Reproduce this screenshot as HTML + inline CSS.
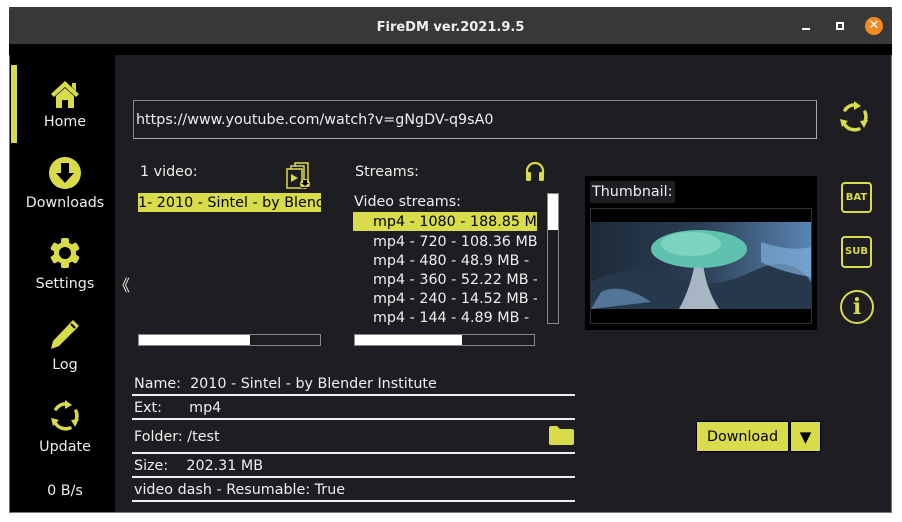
<!DOCTYPE html>
<html><head><meta charset="utf-8"><style>
*{margin:0;padding:0;box-sizing:border-box}
body{width:902px;height:522px;background:#fff;position:relative;overflow:hidden;font-family:"DejaVu Sans","Liberation Sans",sans-serif;font-size:14.3px;color:#eee}
.a{position:absolute;white-space:nowrap}
.ln{position:absolute;left:132px;width:443px;height:2px;background:#eee}
.t{position:absolute;line-height:17px;margin-top:1px;white-space:nowrap}
</style></head><body>
<div class="a" style="left:9px;top:7px;width:883px;height:506px;background:#1e1e22;border:1px solid #777;border-top:none"></div>
<div class="a" style="left:9px;top:7px;width:883px;height:37px;background:#383838;border-radius:4px 4px 0 0"></div>
<div class="a" style="left:9px;top:20px;width:883px;text-align:center;font-weight:bold;font-size:13px;color:#eee">FireDM ver.2021.9.5</div>
<div class="a" style="left:802px;top:28px;width:8px;height:2px;background:#fff"></div>
<div class="a" style="left:836px;top:22px;width:8px;height:8px;border:2px solid #fff"></div>
<div class="a" style="left:865px;top:17px;width:18px;height:18px;border-radius:50%;background:#f08a24;color:#fff;font-size:13px;font-weight:bold;text-align:center;line-height:18px">✕</div>
<div class="a" style="left:9px;top:44px;width:883px;height:11px;background:#000"></div>
<div class="a" style="left:10px;top:44px;width:105px;height:468px;background:#000"></div>
<div class="a" style="left:11px;top:65px;width:6px;height:78px;background:#d9dc4a"></div>
<svg class="a" style="left:49px;top:78px" width="32" height="32" viewBox="0 0 32 32"><path d="M2 16 L16 3 L30 16 L27 19 L16 9 L5 19Z M23 5h4v8l-4-4z" fill="#d9dc4a"/><path d="M7 18 L16 10 L25 18 V30 H19 V22 H13 V30 H7Z" fill="#d9dc4a"/></svg>
<div class="t" style="left:10px;width:110px;text-align:center;top:113px">Home</div>
<svg class="a" style="left:49px;top:157px" width="32" height="32"><circle cx="16" cy="16" r="16" fill="#d9dc4a"/><path d="M12 6h8v10h5L16 26 7 16h5z" fill="#000"/></svg>
<div class="t" style="left:10px;width:110px;text-align:center;top:194px">Downloads</div>
<svg class="a" style="left:49px;top:237px" width="32" height="32" viewBox="0 0 32 32"><g fill="#d9dc4a"><circle cx="16" cy="16" r="11"/><rect x="12" y="1" width="8" height="30" rx="2"/><rect x="12" y="1" width="8" height="30" rx="2" transform="rotate(60 16 16)"/><rect x="12" y="1" width="8" height="30" rx="2" transform="rotate(120 16 16)"/></g><circle cx="16" cy="16" r="6" fill="#000"/></svg>
<div class="t" style="left:10px;width:110px;text-align:center;top:275px">Settings</div>
<div class="a" style="left:114px;top:272px;font-size:16px">《</div>
<svg class="a" style="left:49px;top:318px" width="32" height="34" viewBox="0 0 32 34"><path d="M24 2 L30 8 L10 28 L2 31 L4 23Z" fill="#d9dc4a"/><path d="M22 6l4 4" stroke="#000" stroke-width="2"/></svg>
<div class="t" style="left:10px;width:110px;text-align:center;top:356px">Log</div>
<svg class="a" style="left:48px;top:399px" width="34" height="34" viewBox="0 0 34 34"><g fill="none" stroke="#d9dc4a" stroke-width="3.5" stroke-linecap="round"><path d="M8 10 A12 12 0 0 1 19 5"/><path d="M28 12 A12 12 0 0 1 27 23"/><path d="M22 29 A12 12 0 0 1 8 25"/></g><g fill="#d9dc4a"><path d="M17 1l7 5-7 4z"/><path d="M31 20l-4 8-4-7z"/><path d="M3 19l8 2-6 6z"/></g></svg>
<div class="t" style="left:10px;width:110px;text-align:center;top:438px">Update</div>
<div class="t" style="left:10px;width:110px;text-align:center;top:482px">0 B/s</div>
<div class="a" style="left:133px;top:100px;width:684px;height:39px;border:1px solid #888;border-right-color:#aaa;border-bottom-color:#aaa;background:#1e1e22;padding:11px 2px;line-height:17px">https://www.youtube.com/watch?v=gNgDV-q9sA0</div>
<svg class="a" style="left:837px;top:100px" width="34" height="34" viewBox="0 0 34 34"><g fill="none" stroke="#d9dc4a" stroke-width="3.5" stroke-linecap="round"><path d="M8 10 A12 12 0 0 1 19 5"/><path d="M28 12 A12 12 0 0 1 27 23"/><path d="M22 29 A12 12 0 0 1 8 25"/></g><g fill="#d9dc4a"><path d="M17 1l7 5-7 4z"/><path d="M31 20l-4 8-4-7z"/><path d="M3 19l8 2-6 6z"/></g></svg>
<div class="t" style="left:140px;top:163px">1 video:</div>
<svg class="a" style="left:286px;top:161px" width="27" height="29" viewBox="0 0 27 29"><g fill="none" stroke="#d9dc4a" stroke-width="1.5"><rect x="1" y="8" width="15" height="19"/><path d="M5 8V5h13v17h-2M9 5V2h13v17h-4"/></g><path d="M5 13l7 4-7 4z" fill="#d9dc4a"/><circle cx="19" cy="23" r="5" fill="#d9dc4a"/><path d="M17 19h4v3h2l-4 3-4-3h2z M15 26h8v1h-8z" fill="#000"/></svg>
<div class="a" style="left:138px;top:193px;width:183px;height:19px;background:#d9dc4a;color:#000;overflow:hidden;line-height:20px">1- 2010 - Sintel - by Blender Institute</div>
<div class="a" style="left:138px;top:334px;width:183px;height:12px;border:1px solid #888;background:#1e1e22"><div style="width:111px;height:10px;background:#fff"></div></div>
<div class="t" style="left:355px;top:163px">Streams:</div>
<svg class="a" style="left:524px;top:161px" width="22" height="20" viewBox="0 0 22 20"><path d="M3 14V10a8 8 0 0 1 16 0v4" fill="none" stroke="#d9dc4a" stroke-width="2.2"/><rect x="2" y="11" width="5" height="9" rx="1.5" fill="#d9dc4a"/><rect x="15" y="11" width="5" height="9" rx="1.5" fill="#d9dc4a"/></svg>
<div class="t" style="left:354px;top:193px">Video streams:</div>
<div class="a" style="left:353px;top:212px;width:184px;height:19px;background:#d9dc4a;color:#000;overflow:hidden;line-height:20px;padding-left:20px">mp4 - 1080 - 188.85 MB</div>
<div class="t" style="left:373px;top:233px;width:164px;overflow:hidden">mp4 - 720 - 108.36 MB</div>
<div class="t" style="left:373px;top:252px;width:164px;overflow:hidden">mp4 - 480 - 48.9 MB - </div>
<div class="t" style="left:373px;top:271px;width:164px;overflow:hidden">mp4 - 360 - 52.22 MB - </div>
<div class="t" style="left:373px;top:290px;width:164px;overflow:hidden">mp4 - 240 - 14.52 MB - </div>
<div class="t" style="left:373px;top:309px;width:164px;overflow:hidden">mp4 - 144 - 4.89 MB - </div>
<div class="a" style="left:547px;top:193px;width:12px;height:131px;border:1px solid #888;background:#1e1e22"><div style="width:10px;height:36px;background:#fff"></div></div>
<div class="a" style="left:354px;top:334px;width:181px;height:12px;border:1px solid #888;background:#1e1e22"><div style="width:107px;height:10px;background:#fff"></div></div>
<div class="a" style="left:585px;top:176px;width:232px;height:154px;background:#000"></div>
<div class="a" style="left:590px;top:181px;width:85px;height:22px;background:#1e1e22;padding:2px 2px;line-height:18px">Thumbnail:</div>
<div class="a" style="left:590px;top:208px;width:222px;height:116px;border:1px solid #333;background:#000"></div>
<svg class="a" style="left:591px;top:222px" width="220" height="87" viewBox="0 0 220 87"><defs><linearGradient id="g" x1="0" x2="1"><stop offset="0" stop-color="#1d2a38"/><stop offset=".5" stop-color="#2c3e55"/><stop offset="1" stop-color="#5a86b4"/></linearGradient></defs><rect width="220" height="87" fill="url(#g)"/><path d="M0 60 Q40 40 80 55 T160 50 T220 60 V87H0Z" fill="#26384c"/><path d="M170 20 Q200 30 220 25 V55 Q190 50 170 40Z" fill="#7eaed8" opacity=".7"/><path d="M10 70 Q30 60 60 80 L0 87Z" fill="#6f9fcc" opacity=".6"/><path d="M104 40 Q100 65 88 87 H128 Q114 65 112 40Z" fill="#a8b6c4"/><ellipse cx="108" cy="27" rx="48" ry="19" fill="#5fc2ae"/><ellipse cx="100" cy="22" rx="30" ry="12" fill="#8fe0cc" opacity=".6"/></svg>
<div class="a" style="left:841px;top:182px;width:31px;height:31px;border:2px solid #d9dc4a;border-radius:4px;color:#d9dc4a;font-size:10px;font-weight:bold;text-align:center;line-height:27px">BAT</div>
<div class="a" style="left:841px;top:236px;width:31px;height:32px;border:2px solid #d9dc4a;border-radius:4px;color:#d9dc4a;font-size:10px;font-weight:bold;text-align:center;line-height:28px">SUB</div>
<div class="a" style="left:840px;top:290px;width:34px;height:34px;border:2px solid #d9dc4a;border-radius:50%;color:#d9dc4a;font-size:22px;font-weight:bold;font-family:'DejaVu Serif',serif;text-align:center;line-height:30px">i</div>
<div class="t" style="left:134px;top:375px">Name:&nbsp; 2010 - Sintel - by Blender Institute</div>
<div class="ln" style="top:394px"></div>
<div class="t" style="left:134px;top:399px">Ext:&nbsp;&nbsp;&nbsp;&nbsp;&nbsp; mp4</div>
<div class="ln" style="top:418px"></div>
<div class="t" style="left:134px;top:428px">Folder: /test</div>
<svg class="a" style="left:549px;top:426px" width="25" height="19"><path d="M0 2a2 2 0 0 1 2-2h6l3 3h12a2 2 0 0 1 2 2v12a2 2 0 0 1-2 2H2a2 2 0 0 1-2-2z" fill="#d9dc4a"/></svg>
<div class="ln" style="top:452px"></div>
<div class="t" style="left:134px;top:457px">Size:&nbsp;&nbsp;&nbsp; 202.31 MB</div>
<div class="ln" style="top:476px"></div>
<div class="t" style="left:134px;top:481px">video dash - Resumable: True</div>
<div class="ln" style="top:500px"></div>
<div class="a" style="left:696px;top:421px;width:93px;height:31px;background:#d9dc4a;border:1px solid #000;color:#000;text-align:center;line-height:31px">Download</div>
<div class="a" style="left:790px;top:421px;width:31px;height:31px;background:#d9dc4a;border:1px solid #000;color:#000;text-align:center;line-height:30px;font-size:15px">▼</div>
</body></html>
